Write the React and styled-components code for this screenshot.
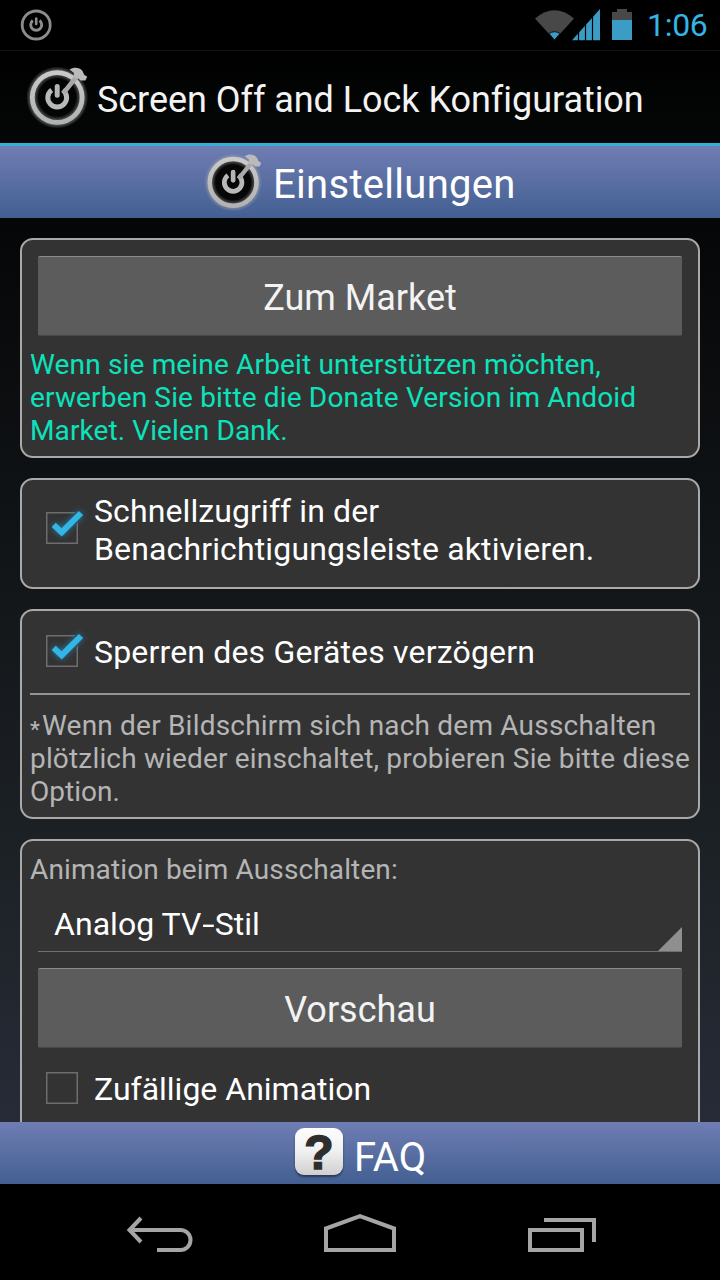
import React from "react";
import styled, { createGlobalStyle } from "styled-components";

const GlobalStyle = createGlobalStyle`
  * { box-sizing: border-box; }
  html, body { margin: 0; padding: 0; background: #000; }
  body { font-family: Roboto, "Liberation Sans", sans-serif; color: #fff; }
  svg { display: block; flex: none; }
`;

const Screen = styled.div`
  width: 720px;
  height: 1280px;
  display: flex;
  flex-direction: column;
  overflow: hidden;
  background: #000;
`;

const StatusBar = styled.header`
  height: 50px;
  flex: none;
  display: flex;
  align-items: center;
  padding: 0 12px 0 18px;
`;

const StatusIcons = styled.div`
  margin-left: auto;
  display: flex;
  align-items: center;
`;

const Clock = styled.span`
  width: 61px;
  margin-left: 14px;
  font-size: 32px;
  line-height: 38px;
  letter-spacing: -0.3px;
  color: #33b5e5;
  white-space: nowrap;
`;

const ActionBar = styled.div`
  height: 96px;
  flex: none;
  display: flex;
  align-items: center;
  padding: 0 0 0 24px;
  background: linear-gradient(#000, #050707);
  border-top: 1px solid #121212;
  border-bottom: 3px solid #35b0d6;

  svg { margin-top: -2px; }
`;

const ActionTitle = styled.h1`
  margin: 6px 0 0 9px;
  font-size: 36px;
  line-height: 42px;
  font-weight: 400;
  letter-spacing: -0.05px;
  color: #f3f3f3;
  white-space: nowrap;
`;

const BlueBar = styled.div`
  height: ${(p) => p.$height}px;
  flex: none;
  display: flex;
  align-items: center;
  padding-left: ${(p) => p.$indent}px;
  background: linear-gradient(#6f7db3, #435f91);

  svg { margin-top: -3px; }
`;

const BlueBarTitle = styled.h2`
  margin: ${(p) => p.$top}px 0 0 ${(p) => p.$left}px;
  font-size: 40px;
  line-height: 46px;
  font-weight: 400;
  letter-spacing: ${(p) => p.$spacing || 0}px;
  white-space: nowrap;
`;

const HelpTile = styled.div`
  width: 48px;
  height: 47px;
  margin-top: -3px;
  display: flex;
  justify-content: center;
  border-radius: 9px;
  background: linear-gradient(#fdfdfd, #f0f0f0 50%, #cfcfcf);
  box-shadow: 0 2px 2px rgba(20, 30, 50, 0.6);
  font: bold 48px/49px "Liberation Sans", sans-serif;
  color: #2e2e2e;
  -webkit-text-stroke: 1.6px #2e2e2e;
`;

const Content = styled.main`
  flex: 1;
  min-height: 0;
  overflow: hidden;
  display: flex;
  flex-direction: column;
  gap: 20px;
  padding: 20px 20px 0;
  background: linear-gradient(#050607, #14181b 45%, #20252b 80%, #272b38);
`;

const Card = styled.section`
  flex: none;
  height: ${(p) => p.$height}px;
  padding: 0 8px;
  background: #333;
  border: 2px solid #a9a9a9;
  border-radius: 13px;
`;

const Button = styled.button`
  display: block;
  width: 644px;
  height: 80px;
  margin: 16px 8px 0;
  padding: 3px 0 0;
  border: 0;
  border-top: 1px solid #8c8c8c;
  border-bottom: 1px solid #484848;
  border-radius: 2px;
  background: #5c5c5c;
  color: #f3f3f3;
  font-family: inherit;
  font-size: 36px;
  line-height: 42px;
`;

const Note = styled.p`
  margin: ${(p) => p.$top}px 0 0;
  font-size: 28px;
  line-height: 33px;
  color: ${(p) => p.$color || "#b5b5b5"};
  white-space: nowrap;
`;

const Line = styled.span`
  display: block;
  letter-spacing: ${(p) => p.$spacing || 0}px;
`;

const Asterisk = styled.span`
  font-size: 22px;
  font-weight: 500;
  line-height: 0;
  vertical-align: -2px;
  margin-right: 2px;
`;

const CheckRow = styled.label`
  display: flex;
  align-items: flex-start;
  height: ${(p) => p.$height}px;
  padding-left: 10px;
`;

const CheckLabel = styled.span`
  margin: ${(p) => p.$top}px 0 0 0;
  font-size: 32px;
  line-height: 38px;
  white-space: nowrap;
`;

const CheckSlot = styled.span`
  width: 54px;
  flex: none;
  padding-top: ${(p) => p.$top}px;
`;

const Divider = styled.hr`
  height: 2px;
  margin: 0;
  border: 0;
  background: #959595;
`;

const Spinner = styled.div`
  display: flex;
  align-items: flex-end;
  justify-content: space-between;
  width: 644px;
  height: 64px;
  margin: 2px 8px 0;
  padding-left: 16px;
  border-bottom: 1px solid #707070;
  font-size: 32px;
  line-height: 38px;
`;

const SpinnerValue = styled.span`
  padding-bottom: 8px;
  letter-spacing: 0.05px;
`;

const WideHyphen = styled.span`
  display: inline-block;
  transform: scaleX(1.4);
  margin: 0 2.2px;
`;

const NavBar = styled.nav`
  height: 96px;
  flex: none;
  display: flex;
  align-items: flex-start;
  gap: 124px;
  padding: 28px 0 0 122px;
`;

function PowerIcon({ size, fill }) {
  return (
    <svg width={size} height={size} viewBox="0 0 64 64" overflow="visible">
      <defs>
        <linearGradient id="metal" x1="0" y1="0" x2="0" y2="1">
          <stop offset="0" stopColor="#c9c9c9" />
          <stop offset="1" stopColor="#b2b2b2" />
        </linearGradient>
        <radialGradient id="halo" cx="33.2" cy="33.5" r="31" gradientUnits="userSpaceOnUse">
          <stop offset=".6" stopColor="#aaa" stopOpacity="0" />
          <stop offset=".75" stopColor="#aaa" stopOpacity=".5" />
          <stop offset=".87" stopColor="#aaa" stopOpacity=".5" />
          <stop offset="1" stopColor="#aaa" stopOpacity="0" />
        </radialGradient>
      </defs>
      {fill && <circle cx="33.2" cy="33.5" r="25" fill={fill} />}
      <circle cx="33.2" cy="33.5" r="31" fill="url(#halo)" />
      <circle cx="33.2" cy="33.5" r="24.9" fill="none" stroke="url(#metal)" strokeWidth="4.8" />
      <path d="M27.7 26A9.4 9.4 0 1 0 38.7 26" fill="none" stroke="#b9b9b9" strokeWidth="5" />
      <path d="M33.2 22.500V31.300" stroke="#000" strokeWidth="7" strokeLinecap="round" />
      <path d="M33.2 22.500V31.300" stroke="#b4b4b4" strokeWidth="5" strokeLinecap="round" />
      <path d="M39.5 29L53.5 11.500" stroke="#a9a9a9" strokeWidth="4.6" />
      <path
        d="M45.5 5.5C50 2.8 55.5 3.3 58.5 7L60.2 10.7L63.3 12.7L61.3 16.5L56.5 16.5L54.5 14.5L49.5 13.5L50 9Z"
        fill="#bababa"
      />
    </svg>
  );
}

function StatusPowerIcon() {
  return (
    <svg width="36" height="36" viewBox="0 0 36 36" fill="none" stroke="#8c8c8c">
      <circle cx="18.2" cy="18" r="14" strokeWidth="2.8" />
      <path d="M14.8 13.5A5.5 5.5 0 1 0 21.6 13.5" strokeWidth="2.9" />
      <path d="M18.2 11.5V17" strokeWidth="2.6" strokeLinecap="round" />
    </svg>
  );
}

function SignalIcons() {
  return (
    <svg width="99" height="36" viewBox="534 7 99 36">
      <path d="M535 18.5Q554.5 2 574 18.5L554.5 40Z" fill="#484848" />
      <path d="M549 33.5Q554.5 30 560 33.5L554.5 40Z" fill="#3b9dc5" stroke="#000" strokeWidth=".8" />
      <path d="M572 40.2L600 9V40.2Z" fill="#3b9dc5" />
      <path d="M578.5 30V41M585.5 22V41M592.5 14V41" stroke="#000" strokeWidth="1.2" />
      <path d="M612 12H617V9H627V12H632V20H612Z" fill="#484848" />
      <rect x="612" y="20" width="20" height="20" fill="#3b9dc5" />
    </svg>
  );
}

const Tick = styled.path`
  stroke: #33b5e5;
  stroke-width: 6px;
  filter: drop-shadow(0 0 3px rgba(30, 150, 200, 0.8));
`;

function CheckBox({ checked }) {
  return (
    <svg width="40" height="34" viewBox="0 0 40 34" overflow="visible">
      <rect x="6.75" y="1.75" width="30.5" height="30.5" fill="none" stroke="#6d6d6d" strokeWidth="1.5" />
      {checked && (
        <g fill="none">
          <path d="M13.5 13.5L21.7 21.5L41.5 1.5" stroke="#333" strokeWidth="9" />
          <Tick d="M13.700 13.8L21.7 21.4L41 2" />
        </g>
      )}
    </svg>
  );
}

const CheckItem = ({ checked, height, boxTop, labelTop, children }) => (
  <CheckRow $height={height}>
    <CheckSlot $top={boxTop}>
      <CheckBox checked={checked} />
    </CheckSlot>
    <CheckLabel $top={labelTop}>{children}</CheckLabel>
  </CheckRow>
);

export default function App() {
  return (
    <>
      <GlobalStyle />
      <Screen>
        <StatusBar>
          <StatusPowerIcon />
          <StatusIcons>
            <SignalIcons />
            <Clock>1:06</Clock>
          </StatusIcons>
        </StatusBar>

        <ActionBar>
          <PowerIcon size={64} />
          <ActionTitle>Screen Off and Lock Konfiguration</ActionTitle>
        </ActionBar>

        <BlueBar $height={72} $indent={202}>
          <PowerIcon size={60} fill="#070707" />
          <BlueBarTitle $top={5} $left={11} $spacing={0.3}>Einstellungen</BlueBarTitle>
        </BlueBar>

        <Content>
          <Card $height={220}>
            <Button>Zum Market</Button>
            <Note $top={12} $color="#0ce3bc">
              <Line $spacing={0.16}>Wenn sie meine Arbeit unterstützen möchten,</Line>
              <Line $spacing={0.16}>erwerben Sie bitte die Donate Version im Andoid</Line>
              <Line $spacing={0.1}>Market. Vielen Dank.</Line>
            </Note>
          </Card>

          <Card $height={111}>
            <CheckItem checked height={107} boxTop={31} labelTop={12}>
              <Line $spacing={0.1}>Schnellzugriff in der</Line>
              <Line $spacing={0.14}>Benachrichtigungsleiste aktivieren.</Line>
            </CheckItem>
          </Card>

          <Card $height={210}>
            <CheckItem checked height={82} boxTop={23} labelTop={22}>
              <Line $spacing={0.17}>Sperren des Gerätes verzögern</Line>
            </CheckItem>
            <Divider />
            <Note $top={14}>
              <Line $spacing={0.2}><Asterisk>*</Asterisk>Wenn der Bildschirm sich nach dem Ausschalten</Line>
              <Line $spacing={0.17}>plötzlich wieder einschaltet, probieren Sie bitte diese</Line>
              <Line>Option.</Line>
            </Note>
          </Card>

          <Card $height={320}>
            <Note $top={12}>
              <Line $spacing={0.13}>Animation beim Ausschalten:</Line>
            </Note>
            <Spinner>
              <SpinnerValue>Analog TV<WideHyphen>-</WideHyphen>Stil</SpinnerValue>
              <svg width="24" height="24" viewBox="0 0 24 24">
                <path d="M0 24L24 0V24Z" fill="#8f8f8f" />
              </svg>
            </Spinner>
            <Button>Vorschau</Button>
            <CheckItem height={80} boxTop={23} labelTop={22}>
              <Line>Zufällige Animation</Line>
            </CheckItem>
          </Card>
        </Content>

        <BlueBar $height={62} $indent={295}>
          <HelpTile>?</HelpTile>
          <BlueBarTitle $top={10} $left={11}>FAQ</BlueBarTitle>
        </BlueBar>

        <NavBar>
          <svg width="76" height="44" viewBox="122 1212 76 44" fill="none" stroke="#a5a5a5" strokeWidth="4">
            <path d="M130 1230H180.5A10 10 0 0 1 180.5 1250H157" />
            <path d="M141 1218L129.5 1230L141 1242" />
          </svg>
          <svg width="76" height="44" viewBox="322 1212 76 44" fill="none" stroke="#a5a5a5" strokeWidth="4">
            <path d="M326 1250V1228.5L360 1216.2L394 1228.5V1250Z" />
          </svg>
          <svg width="76" height="44" viewBox="522 1212 76 44" fill="none" stroke="#a5a5a5" strokeWidth="4">
            <path d="M530 1230H582V1250H530Z" />
            <path d="M544 1220H594V1242" />
          </svg>
        </NavBar>
      </Screen>
    </>
  );
}
